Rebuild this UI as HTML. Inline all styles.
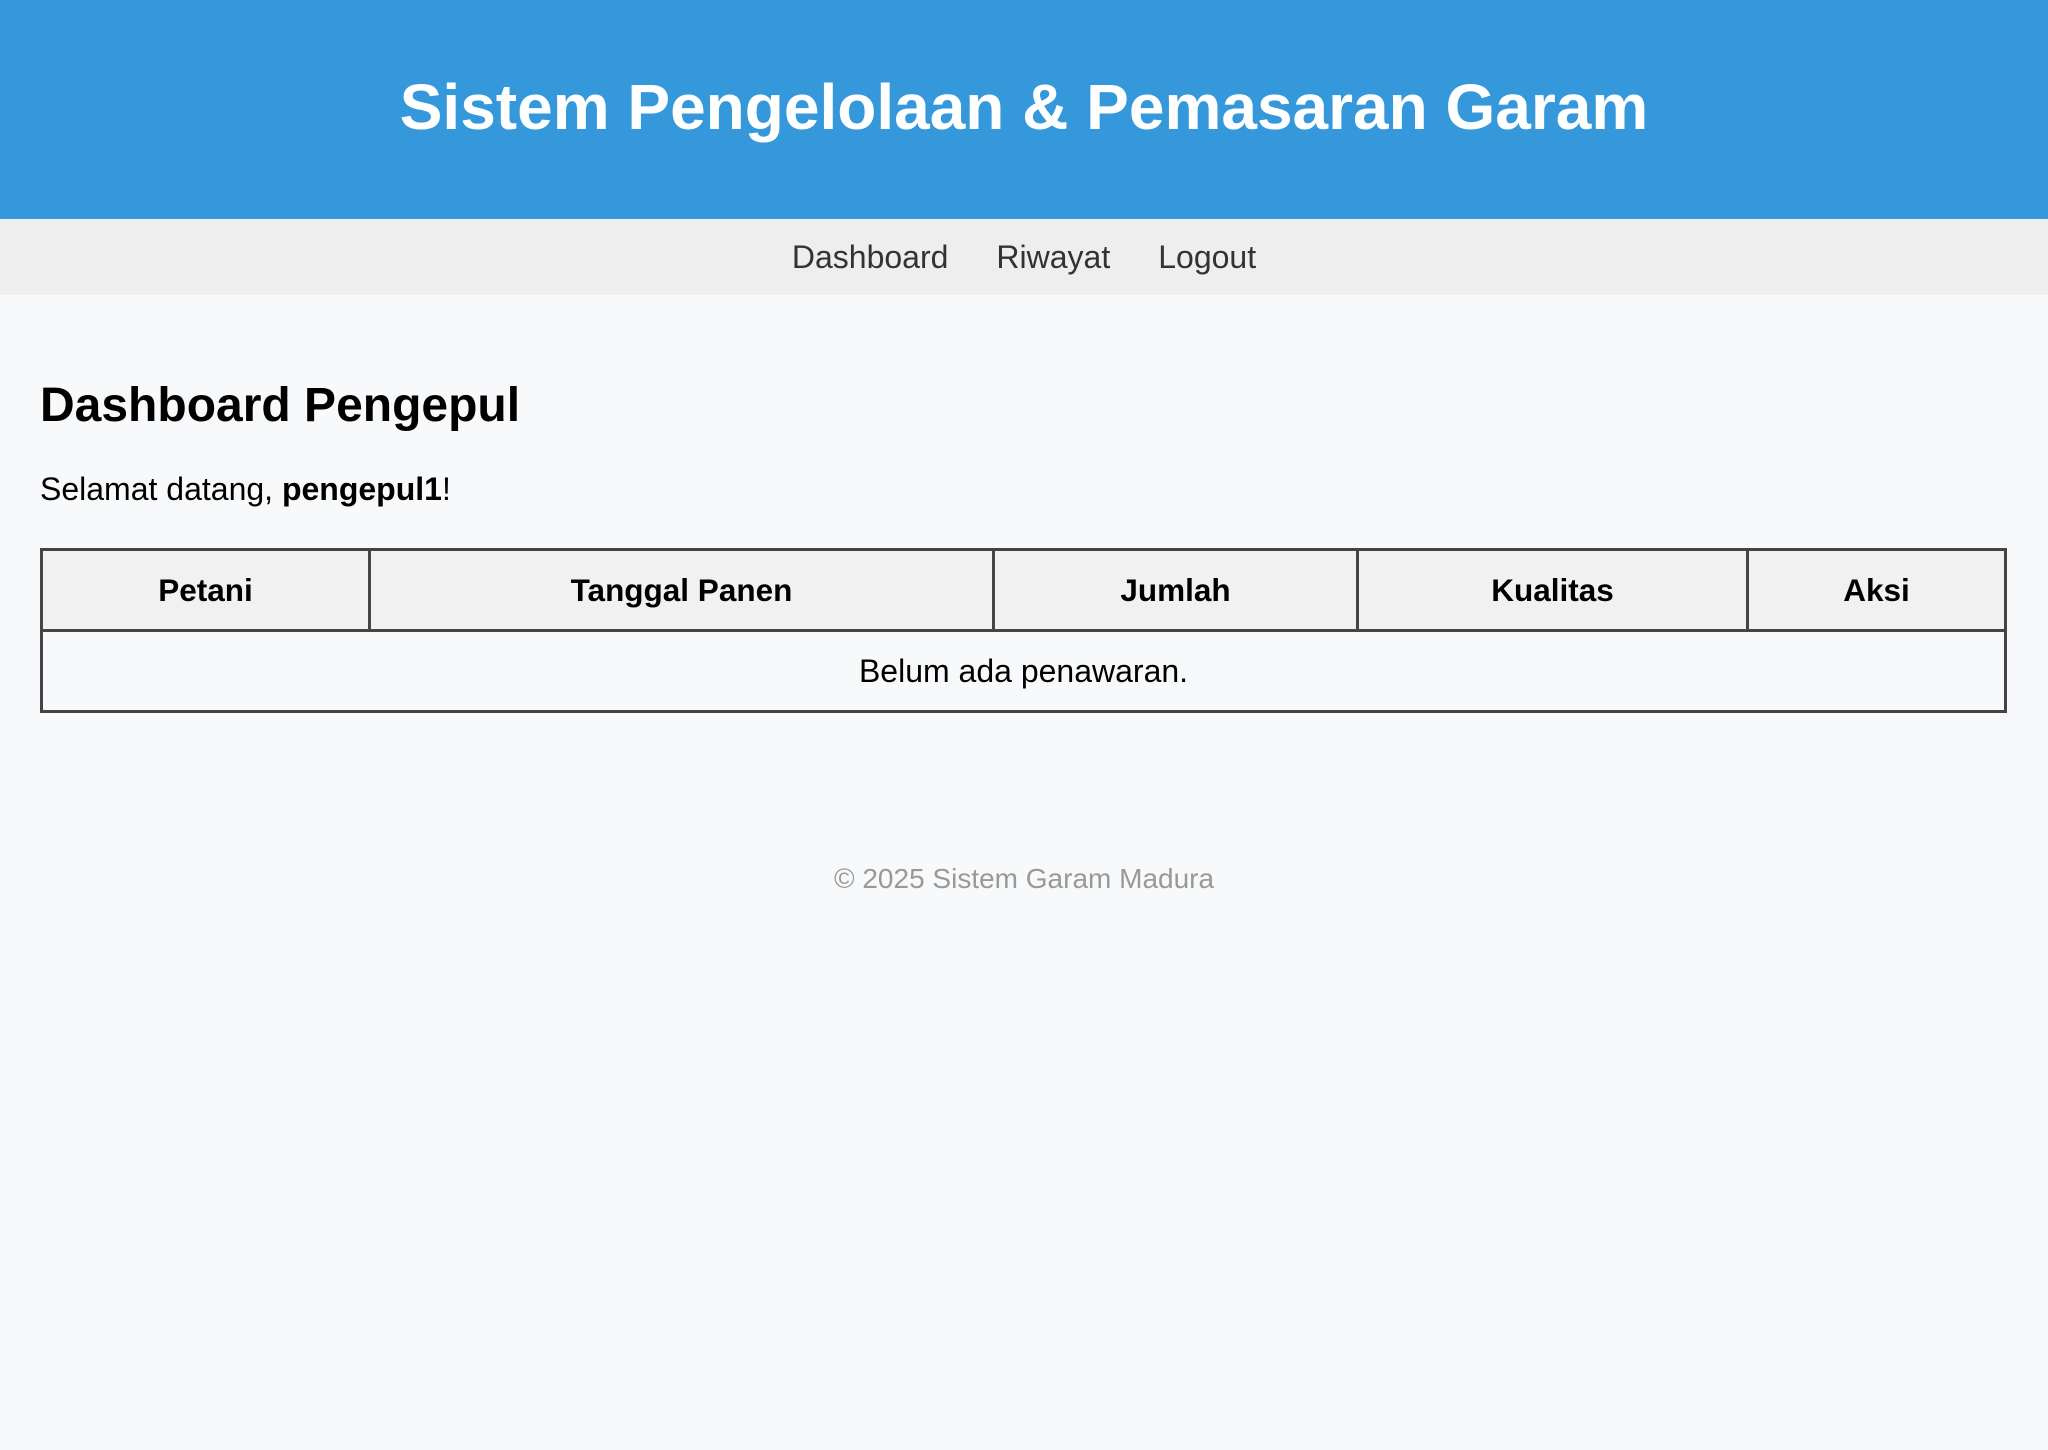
<!DOCTYPE html>
<html><head><meta charset="utf-8"><style>
*{margin:0;padding:0;box-sizing:border-box}
body{width:2048px;height:1450px;background:#f8f9fa;font-family:"Liberation Sans",Arial,sans-serif;color:#000;overflow:hidden}
header{background:#3498db;height:219px;color:#fff;text-align:center}
header h1{font-size:64px;font-weight:bold;line-height:219px;position:relative;top:-2px}
nav{background:#eee;height:76px;text-align:center;line-height:76px;font-size:32px}
nav a{color:#333;text-decoration:none;margin:0 24px}
h2{font-size:48px;font-weight:bold;position:absolute;top:378px;left:40px}
p.w{font-size:32px;position:absolute;top:471px;left:40px}
table{position:absolute;top:548px;left:40px;width:1967px;border-collapse:collapse;font-size:32px}
td,th{border:3px solid #444;text-align:center}
th{background:#f1f1f1;height:81px;font-weight:bold;font-size:31.5px}
td{height:81px}
footer{position:absolute;top:863px;left:0;width:2048px;text-align:center;color:#999;font-size:28px}
</style></head><body>
<header><h1>Sistem Pengelolaan &amp; Pemasaran Garam</h1></header>
<nav><a>Dashboard</a><a>Riwayat</a><a>Logout</a></nav>
<h2>Dashboard Pengepul</h2>
<p class="w">Selamat datang, <b>pengepul1</b>!</p>
<table>
<tr><th style="width:328px">Petani</th><th style="width:624px">Tanggal Panen</th><th style="width:364px">Jumlah</th><th style="width:390px">Kualitas</th><th>Aksi</th></tr>
<tr><td colspan="5">Belum ada penawaran.</td></tr>
</table>
<footer>© 2025 Sistem Garam Madura</footer>
</body></html>
